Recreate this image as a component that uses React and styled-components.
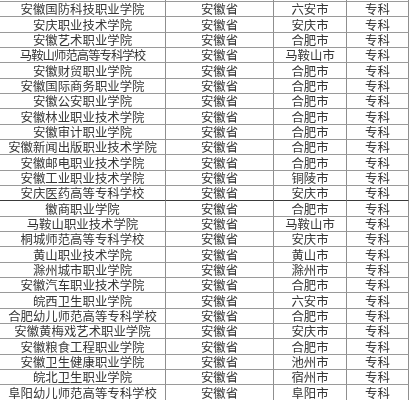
import React from "react";
import styled, { createGlobalStyle } from "styled-components";

const GlobalStyle = createGlobalStyle`
  html, body { margin: 0; padding: 0; background: #ffffff; }
  body { width: 409px; height: 400px; overflow: hidden; }
`;

const Sheet = styled.div`
  display: grid;
  grid-template-columns: 166px 108px 73px 62px;
  width: 409px;
  font-family: "Noto Sans CJK SC", "Noto Sans", sans-serif;
  font-size: 12.4px;
  color: #363636;
  filter: blur(0.45px);
`;

const Cell = styled.div`
  box-sizing: border-box;
  height: ${(p) => (p.$cut ? "2px" : "15.33px")};
  border-right: 1px solid #8f8f8f;
  border-bottom: ${(p) => (p.$heavy ? "1.5px solid #3a3a3a" : "1px solid #9a9a9a")};
  display: flex;
  align-items: flex-end;
  justify-content: center;
  white-space: nowrap;
  line-height: 13px;
  letter-spacing: ${(p) => (p.$tight ? "-1px" : "0")};
`;

const rows = [
  ["安徽国防科技职业学院", "六安市"],
  ["安庆职业技术学院", "安庆市"],
  ["安徽艺术职业学院", "合肥市"],
  ["马鞍山师范高等专科学校", "马鞍山市", true],
  ["安徽财贸职业学院", "合肥市"],
  ["安徽国际商务职业学院", "合肥市"],
  ["安徽公安职业学院", "合肥市"],
  ["安徽林业职业技术学院", "合肥市"],
  ["安徽审计职业学院", "合肥市"],
  ["安徽新闻出版职业技术学院", "合肥市"],
  ["安徽邮电职业技术学院", "合肥市"],
  ["安徽工业职业技术学院", "铜陵市"],
  ["安庆医药高等专科学校", "安庆市"],
  ["徽商职业学院", "合肥市"],
  ["马鞍山职业技术学院", "马鞍山市"],
  ["桐城师范高等专科学校", "安庆市"],
  ["黄山职业技术学院", "黄山市"],
  ["滁州城市职业学院", "滁州市"],
  ["安徽汽车职业技术学院", "合肥市"],
  ["皖西卫生职业学院", "六安市"],
  ["合肥幼儿师范高等专科学校", "合肥市"],
  ["安徽黄梅戏艺术职业学院", "安庆市"],
  ["安徽粮食工程职业学院", "合肥市"],
  ["安徽卫生健康职业学院", "池州市"],
  ["皖北卫生职业学院", "宿州市"],
  ["阜阳幼儿师范高等专科学校", "阜阳市"],
];

export default function App() {
  return (
    <>
      <GlobalStyle />
      <Sheet>
        {[0, 1, 2, 3].map((i) => (
          <Cell key={"cut" + i} $cut />
        ))}
        {rows.map(([name, city, tight], i) => {
          const heavy = i === 12;
          return (
            <React.Fragment key={name}>
              <Cell $heavy={heavy} $tight={tight}>{name}</Cell>
              <Cell $heavy={heavy}>安徽省</Cell>
              <Cell $heavy={heavy}>{city}</Cell>
              <Cell $heavy={heavy}>专科</Cell>
            </React.Fragment>
          );
        })}
      </Sheet>
    </>
  );
}
